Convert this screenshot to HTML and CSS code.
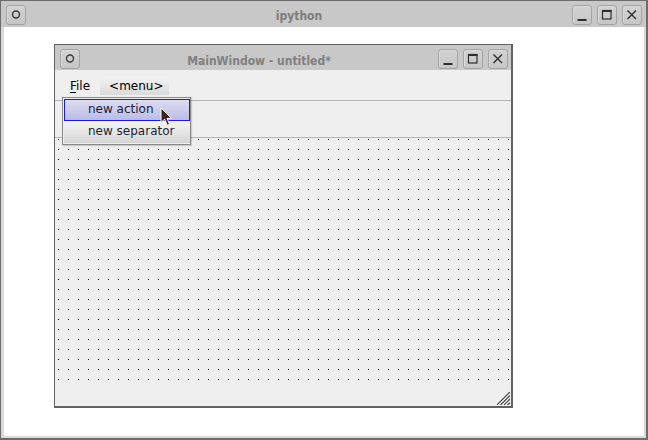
FILE: index.html
```html
<!DOCTYPE html>
<html>
<head>
<meta charset="utf-8">
<link rel="stylesheet" href="styles.css">
</head>
<body>
<div class="outer">
  <div class="titlebar outer-tb">
    <span class="btn"><svg width="20" height="20" viewBox="0 0 20 20"><circle cx="10" cy="9.5" r="3.5" fill="none" stroke="#3a3a3a" stroke-width="1.4"/></svg></span>
    <span class="title outer-title">ipython</span>
    <span class="btns">
      <span class="btn"><svg width="20" height="20" viewBox="0 0 20 20"><rect x="5.5" y="14" width="9" height="2" fill="#2e2e2e"/></svg></span>
      <span class="btn"><svg width="20" height="20" viewBox="0 0 20 20"><rect x="5.5" y="5.5" width="8.5" height="8.5" fill="none" stroke="#2e2e2e" stroke-width="1.2"/><rect x="5" y="5" width="9.5" height="2" fill="#2e2e2e"/></svg></span>
      <span class="btn"><svg width="20" height="20" viewBox="0 0 20 20"><path d="M5.5 5.5 L14 14 M14 5.5 L5.5 14" stroke="#2e2e2e" stroke-width="1.4"/></svg></span>
    </span>
  </div>
  <div class="frame">
    <div class="client">
      <div class="inner">
        <div class="titlebar inner-tb">
          <span class="btn"><svg width="20" height="20" viewBox="0 0 20 20"><circle cx="10" cy="9.5" r="3.5" fill="none" stroke="#3a3a3a" stroke-width="1.4"/></svg></span>
          <span class="title inner-title">MainWindow - untitled*</span>
          <span class="btns">
            <span class="btn"><svg width="20" height="20" viewBox="0 0 20 20"><rect x="5.5" y="14" width="9" height="2" fill="#2e2e2e"/></svg></span>
            <span class="btn"><svg width="20" height="20" viewBox="0 0 20 20"><rect x="5.5" y="5.5" width="8.5" height="8.5" fill="none" stroke="#2e2e2e" stroke-width="1.2"/><rect x="5" y="5" width="9.5" height="2" fill="#2e2e2e"/></svg></span>
            <span class="btn"><svg width="20" height="20" viewBox="0 0 20 20"><path d="M5.5 5.5 L14 14 M14 5.5 L5.5 14" stroke="#2e2e2e" stroke-width="1.4"/></svg></span>
          </span>
        </div>
        <div class="menubar">
          <span class="mitem file"><u>F</u>ile</span>
          <span class="mitem open">&lt;menu&gt;</span>
        </div>
        <div class="toolbar"></div>
        <div class="canvas"></div>
        <div class="statusbar">
          <svg class="grip" width="13" height="13" viewBox="0 0 13 13">
            <path d="M13 0 L0 13 M13 3.5 L3.5 13 M13 7 L7 13 M13 10.5 L10.5 13" stroke="#4a4a4a" stroke-width="1.3"/>
            <path d="M13 1.6 L1.6 13 M13 5.1 L5.1 13 M13 8.6 L8.6 13" stroke="#ffffff" stroke-width="0.9"/>
          </svg>
        </div>
        <div class="popup">
          <div class="pitem active">new action</div>
          <div class="pitem">new separator</div>
        </div>
        <svg class="cursor" width="14" height="20" viewBox="0 0 14 20">
          <path d="M1 1 L1 15.5 L4.6 12.2 L7.3 18.3 L9.6 17.3 L7 11.4 L11.6 11.4 Z" fill="#3d2418" stroke="#ffffff" stroke-width="1" stroke-linejoin="round"/>
        </svg>
      </div>
    </div>
  </div>
</div>
</body>
</html>
```
FILE: styles.css
```css
* { box-sizing: border-box; }
html, body { margin: 0; padding: 0; background: #ffffff; }
body { font-family: "DejaVu Sans", "Liberation Sans", sans-serif; font-size: 12px; color: #000; }

.outer {
  width: 648px;
  height: 440px;
  border: 1px solid #6c6c6c;
  border-right-width: 2px;
  border-bottom-width: 2px;
  display: flex;
  flex-direction: column;
}

.titlebar {
  display: flex;
  align-items: center;
  background: #c8c8c8;
  flex: none;
}
.outer-tb { height: 26px; padding: 1px 4px 0 5px; }
.inner-tb { height: 25px; padding: 2px 3px 0 5px; }

.btn {
  width: 20px;
  height: 20px;
  border: 1px solid #a4a4a4;
  border-radius: 3px;
  background: linear-gradient(#d2d2d2, #c6c6c6);
  display: flex;
  align-items: center;
  justify-content: center;
  flex: none;
  box-shadow: inset 1px 1px 0 #dadada;
}
.btn svg { display: block; margin: -1px; }
.btns { display: flex; gap: 5px; }

.title {
  flex: 1;
  text-align: center;
  font-family: "DejaVu Sans Condensed", "DejaVu Sans", sans-serif;
  font-stretch: condensed;
  font-weight: bold;
  font-size: 12px;
  color: #7c7c7c;
  white-space: nowrap;
}
.outer-title { padding-top: 3px; }
.inner-title { color: #808080; padding-top: 5px; }

.frame {
  flex: 1;
  display: flex;
  background: #d9d9d9;
  padding: 0 2px 2px 3px;
}
.client {
  flex: 1;
  background: #ffffff;
  padding: 17px 0 0 50px;
}

.inner {
  position: relative;
  width: 459px;
  height: 364px;
  border: 1px solid #626262;
  border-right-width: 2px;
  border-bottom-width: 2px;
  background: #efefef;
  display: flex;
  flex-direction: column;
}

.menubar {
  height: 31px;
  flex: none;
  border-bottom: 1px solid #b4b4b4;
  display: flex;
  align-items: center;
  padding-left: 15px;
  padding-top: 1px;
  gap: 10px;
}
.mitem { line-height: 18px; }
.file u { text-decoration: underline; text-underline-offset: 2px; }
.open {
  padding: 0 8px 0 9px;
  width: 69px;
  height: 18px;
  background: linear-gradient(#f2f2f2, #dadada);
  margin-top: 1px;
}

.toolbar {
  height: 37px;
  flex: none;
  border-bottom: 1px solid #b4b4b4;
}

.canvas {
  height: 244px;
  flex: none;
  background: conic-gradient(at 1px 1px, #efefef 75%, #000000 0) 3px 1px / 10px 10px;
}

.statusbar {
  flex: 1;
  display: flex;
  justify-content: flex-end;
  align-items: flex-end;
  padding: 0 1px 1px 0;
}
.grip { display: block; }

.popup {
  position: absolute;
  left: 7px;
  top: 52px;
  width: 129px;
  height: 48px;
  border: 1px solid #8a8a8a;
  background: #efefef;
  padding: 1px 0 1px 1px;
  box-shadow: 1px 1px 1px rgba(0,0,0,0.15);
}
.pitem {
  height: 22px;
  line-height: 21px;
  padding-left: 24px;
  color: #1e1e30;
  background: linear-gradient(#f6f6f6, #d4d4d4);
  white-space: nowrap;
}
.pitem.active {
  border: 1px solid #1a1aee;
  padding-left: 23px;
  line-height: 19px;
  background: linear-gradient(#dcdcf4, #bcbce4);
  color: #1a1a3a;
}

.cursor {
  position: absolute;
  left: 105px;
  top: 62px;
  display: block;
}
```
